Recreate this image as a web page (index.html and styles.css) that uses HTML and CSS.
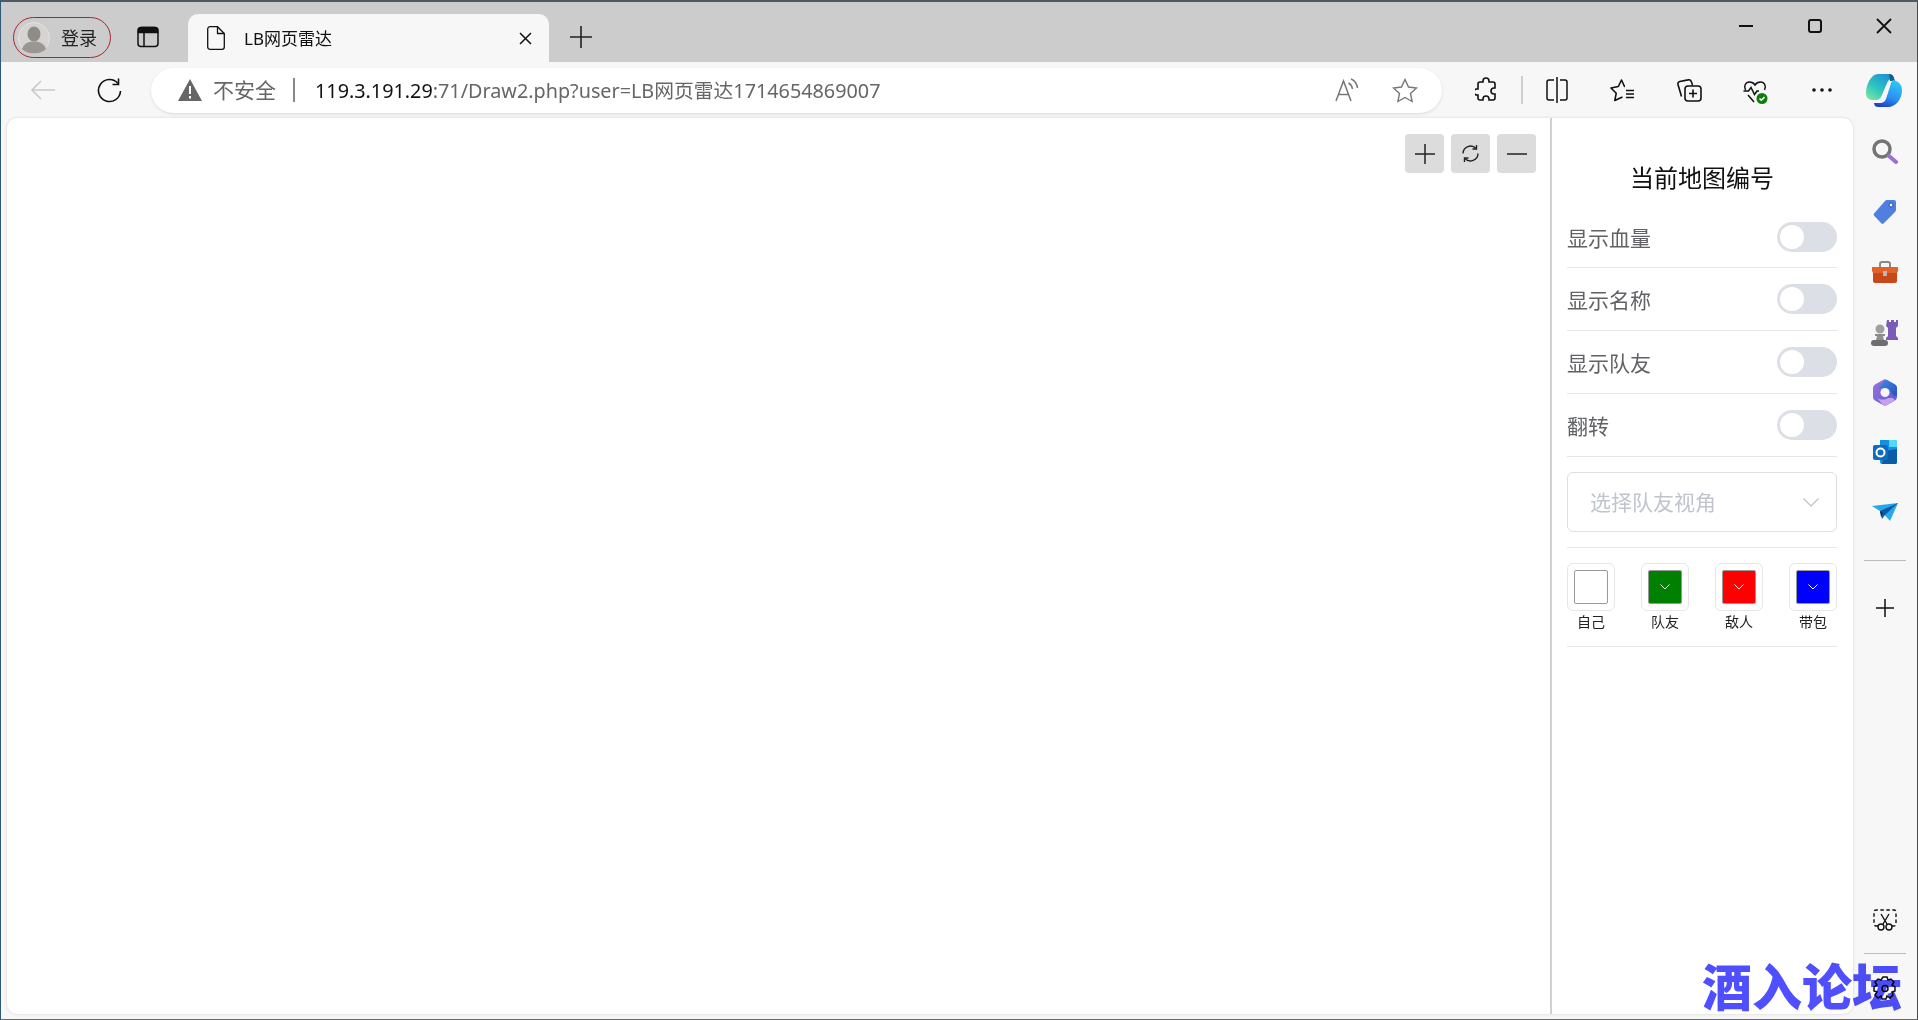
FILE: index.html
```html
<!DOCTYPE html>
<html lang="zh-CN">
<head>
    <meta charset="UTF-8">
    <title>LB网页雷达</title>
    <link rel="stylesheet" href="styles.css">
</head>
<body>
<div class="window">
    <div class="tabstrip">
        <div class="profile">
            <svg class="avatar" width="32" height="32" viewBox="0 0 32 32"><circle cx="16" cy="16" r="15.500" fill="#d6d4d2" stroke="#e4e2e0"/><ellipse cx="16" cy="12" rx="6.500" ry="7.500" fill="#8f8b87"/><path d="M4 27c2-6 7-7.500 12-7.500S26 21 28 27c-3 3-7.500 4.500-12 4.500S7 30 4 27z" fill="#9a9692"/></svg>
            <span class="lift">登录</span>
        </div>
        <svg class="tabs-icon" width="22" height="22" viewBox="0 0 22 22" fill="none" stroke="#111" stroke-width="1.500"><rect x="1" y="1.500" width="20" height="19" rx="3"/><path d="M1.500 4.500a3 3 0 0 1 3-3h13a3 3 0 0 1 3 3v2h-19z" fill="#111"/><path d="M7 6v14"/></svg>
        <div class="tab">
            <svg width="18" height="24" viewBox="0 0 18 24" fill="none" stroke="#111" stroke-width="1.300"><path d="M3 .7h7.500L17.300 7.500V21a2.300 2.300 0 0 1-2.300 2.300H3A2.300 2.300 0 0 1 .7 21V3A2.300 2.300 0 0 1 3 .7z"/><path d="M10.500.7V7.500h6.800"/></svg>
            <span class="tab-title lift">LB网页雷达</span>
            <svg class="tab-close" width="13" height="13" viewBox="0 0 13 13" stroke="#111" stroke-width="1.500"><path d="M1 1l11 11M12 1L1 12"/></svg>
        </div>
        <svg class="new-tab" width="22" height="22" viewBox="0 0 22 22" stroke="#222" stroke-width="1.600"><path d="M11 0v22M0 11h22"/></svg>
        <div class="caption">
            <svg width="16" height="16" viewBox="0 0 16 16" stroke="#111" stroke-width="2"><path d="M1 8h14"/></svg>
            <svg width="16" height="16" viewBox="0 0 16 16" fill="none" stroke="#111" stroke-width="2"><rect x="2" y="2" width="12" height="12" rx="2"/></svg>
            <svg width="16" height="16" viewBox="0 0 16 16" stroke="#111" stroke-width="1.800"><path d="M1 1l14 14M15 1L1 15"/></svg>
        </div>
    </div>

    <div class="toolbar">
        <svg class="back" width="24" height="20" viewBox="0 0 24 20" fill="none" stroke="#c9c9c9" stroke-width="1.600"><path d="M24 10H1M10 1l-9 9 9 9"/></svg>
        <svg class="reload" width="25" height="25" viewBox="0 0 25 25" fill="none" stroke="#111" stroke-width="1.600"><path d="M21 5.500A11 11 0 1 0 23.500 13"/><path d="M21.500 .5v6h-6"/></svg>
        <div class="address">
            <svg width="24" height="22" viewBox="0 0 24 22"><path d="M12 0l12 22H0z" fill="#666"/><path d="M12 7v8M12 17v2.500" stroke="#fff" stroke-width="2"/></svg>
            <span class="not-secure lift">不安全</span>
            <span class="addr-sep"></span>
            <span class="url lift"><b>119.3.191.29</b>:71/Draw2.php?user=LB网页雷达1714654869007</span>
            <svg class="read" width="24" height="24" viewBox="0 0 24 24" fill="none" stroke="#777" stroke-width="1.500"><path d="M1 23L8.500 3 16 23M3.500 16.500h10"/><path d="M13.500 5c2 1 3.500 3 4 6M16 1c3.500 1.500 6 5 6.500 9"/></svg>
            <svg class="star" width="26" height="25" viewBox="0 0 26 25" fill="none" stroke="#777" stroke-width="1.400"><path d="M13 1.500l3.500 7.500 8 1-6 5.500 1.600 8L13 19.500 5.900 23.500l1.600-8-6-5.500 8-1z"/></svg>
        </div>
        <div class="tools">
            <svg class="t-ext" width="22" height="26" viewBox="0 0 22 26" fill="none" stroke="#111" stroke-width="1.600"><path d="M8 4a3 3 0 0 1 6 0v1h4a2 2 0 0 1 2 2v4h-1a3 3 0 0 0 0 6h1v4a2 2 0 0 1-2 2h-4v-1a3 3 0 0 0-6 0v1H5a2 2 0 0 1-2-2v-3H2a3 3 0 0 1 0-6h1V7a2 2 0 0 1 2-2h3z"/></svg>
            <span class="t-sep"></span>
            <svg class="t-split" width="22" height="26" viewBox="0 0 22 26" fill="none" stroke="#111" stroke-width="1.500"><path d="M8 3H3a2 2 0 0 0-2 2v16a2 2 0 0 0 2 2h5M14 3h5a2 2 0 0 1 2 2v16a2 2 0 0 1-2 2h-5M11 0v26"/></svg>
            <svg class="t-fav" width="25" height="23" viewBox="0 0 25 23" fill="none" stroke="#111" stroke-width="1.600" stroke-linejoin="round"><path d="M15 7.500h-.5L11.500 1 8.300 7.500 1 9l5.200 5.300L4.800 21.500 12.500 18"/><path d="M16 11.500h8M16 15h8M16 18.500h8"/></svg>
            <svg class="t-coll" width="25" height="23" viewBox="0 0 25 23" fill="none" stroke="#111" stroke-width="1.600"><path d="M4.500 17.500L1 5.500a2.500 2.500 0 0 1 1.800-3L11 .9a3 3 0 0 1 3.500 2l1 3.500"/><rect x="8" y="7" width="16" height="15" rx="3"/><path d="M16 10.500v8M12 14.500h8"/></svg>
            <svg class="t-health" width="25" height="23" viewBox="0 0 25 23" fill="none" stroke="#111" stroke-width="1.500"><path d="M2.500 9C.5 5 2.500 1 6.500 1c2.500 0 4.500 1.500 5.500 3 1-1.500 3-3 5.500-3 4 0 6 4 4 8"/><path d="M.5 10h5l2.500-3.500 3.500 7 2.500-3.500h2M5 14l6 7"/><circle cx="19" cy="17.500" r="5.500" fill="#107c10" stroke="none"/><path d="M16.500 17.500l1.800 1.800 3.200-3.200" stroke="#fff"/></svg>
            <svg class="t-more" width="20" height="4" viewBox="0 0 20 4" fill="#111"><circle cx="2" cy="2" r="1.800"/><circle cx="10" cy="2" r="1.800"/><circle cx="18" cy="2" r="1.800"/></svg>
            <svg class="t-copilot" width="36" height="34" viewBox="0 0 36 34">
                <defs>
                    <linearGradient id="cpa" x1="0.800" y1="0" x2="0.100" y2="1"><stop offset="0" stop-color="#1c8fd8"/><stop offset=".55" stop-color="#2cc4c0"/><stop offset="1" stop-color="#7ce8a0"/></linearGradient>
                    <linearGradient id="cpb" x1="0.700" y1="0" x2="0.300" y2="1"><stop offset="0" stop-color="#30c8f8"/><stop offset=".6" stop-color="#2a90f0"/><stop offset="1" stop-color="#1c40c8"/></linearGradient>
                </defs>
                <path d="M12 1h11c2.500 0 4 1 5 4-3 0-5 1.500-6.500 4L15 24c-1 2-2.500 3-5 3H6c-4 0-6-3-6-7C0 12 5 1 12 1z" fill="url(#cpa)"/>
                <path d="M23 1c2.500 0 4 1 5 4l1 3h-5z" fill="#16608c"/>
                <path d="M27 7c5 1 9 4 9 10 0 9-6 17-14 17H12c-2 0-3.500-1-4-4h6c3 0 5-1.500 6-4l4.500-14c.5-2 1-4 2.500-5z" fill="url(#cpb)"/>
            </svg>
        </div>
    </div>

    <div class="main">
        <div class="page">
            <div class="canvas">
                <div class="zoom-btns">
                    <button class="zoom-btn"><svg width="20" height="20" viewBox="0 0 20 20" stroke="#222" stroke-width="1.500"><path d="M10 0v20M0 10h20"/></svg></button>
                    <button class="zoom-btn"><svg width="19" height="19" viewBox="0 0 19 19" fill="none" stroke="#222" stroke-width="1.400"><path d="M2 9.500A7.500 7.500 0 0 1 15 4.500M17 9.500A7.500 7.500 0 0 1 4 14.500"/><path d="M15.500 1v4h-4M3.500 18v-4h4"/></svg></button>
                    <button class="zoom-btn"><svg width="20" height="4" viewBox="0 0 20 4" stroke="#222" stroke-width="1.500"><path d="M0 2h20"/></svg></button>
                </div>
            </div>
            <div class="panel">
                <h2 class="panel-title">当前地图编号</h2>
                <div class="row"><span>显示血量</span><span class="switch"></span></div>
                <div class="row"><span>显示名称</span><span class="switch"></span></div>
                <div class="row"><span>显示队友</span><span class="switch"></span></div>
                <div class="row"><span>翻转</span><span class="switch"></span></div>
                <div class="select-wrap">
                    <div class="select">
                        <span class="lift">选择队友视角</span>
                        <svg width="16" height="9" viewBox="0 0 16 9" fill="none" stroke="#c0c4cc" stroke-width="1.300"><path d="M.5.500L8 8 15.500.5"/></svg>
                    </div>
                </div>
                <div class="colors">
                    <div class="color"><div class="picker"><div class="swatch swatch-none"></div></div><span>自己</span></div>
                    <div class="color"><div class="picker"><div class="swatch swatch-green"><svg width="10" height="6" viewBox="0 0 10 6" fill="none" stroke="#fff"><path d="M.5.500L5 5 9.500.5"/></svg></div></div><span>队友</span></div>
                    <div class="color"><div class="picker"><div class="swatch swatch-red"><svg width="10" height="6" viewBox="0 0 10 6" fill="none" stroke="#fff"><path d="M.5.500L5 5 9.500.5"/></svg></div></div><span>敌人</span></div>
                    <div class="color"><div class="picker"><div class="swatch swatch-blue"><svg width="10" height="6" viewBox="0 0 10 6" fill="none" stroke="#fff"><path d="M.5.500L5 5 9.500.5"/></svg></div></div><span>带包</span></div>
                </div>
            </div>
        </div>
        <div class="sidebar">
            <div class="side-cell"><svg width="26" height="26" viewBox="0 0 26 26" fill="none"><circle cx="10" cy="10" r="8" stroke="#757575" stroke-width="3.500"/><path d="M17 17l7 6" stroke="#9b6fd8" stroke-width="4" stroke-linecap="round"/></svg></div>
            <div class="side-cell"><svg width="24" height="26" viewBox="0 0 24 26"><path d="M14 1h7a2 2 0 0 1 2 2v8a3 3 0 0 1-1 2L11 24a2 2 0 0 1-3 0l-6.500-7a2 2 0 0 1 0-3L12 2a3 3 0 0 1 2-1z" fill="#4f7fe0"/><circle cx="18" cy="6" r="2" fill="#fff" stroke="#2a4aa0"/></svg></div>
            <div class="side-cell"><svg width="28" height="22" viewBox="0 0 28 22"><path d="M9 6V3a2 2 0 0 1 2-2h6a2 2 0 0 1 2 2v3" fill="none" stroke="#8a8a8a" stroke-width="2"/><path d="M1 6h26v4l-1 2H2l-1-2z" fill="#e2622a"/><path d="M2 12h24v8a2 2 0 0 1-2 2H4a2 2 0 0 1-2-2z" fill="#c8481a"/><rect x="12" y="10" width="4" height="5" fill="#b8b8b8"/></svg></div>
            <div class="side-cell"><svg width="28" height="27" viewBox="0 0 28 27"><path d="M16 1h2v2h2V1h3v2h2V1h2v6l-2 2v8l2 2v2H15v-2l2-2V9l-2-2z" fill="#7a5cb8"/><circle cx="9" cy="10" r="4.500" fill="#a0a0a0"/><path d="M4 15h10v2H4z" fill="#8a8a8a"/><path d="M6 17h6l1 4H5z" fill="#909090"/><rect x="0" y="21" width="17" height="6" rx="3" fill="#6e6e6e"/></svg></div>
            <div class="side-cell"><svg width="24" height="27" viewBox="0 0 24 27"><defs><linearGradient id="m3a" x1="0" y1="0" x2="1" y2="1"><stop offset="0" stop-color="#a070e0"/><stop offset="1" stop-color="#5060d0"/></linearGradient><linearGradient id="m3b" x1="0" y1="0" x2="1" y2="1"><stop offset="0" stop-color="#3a90e0"/><stop offset="1" stop-color="#2a50c0"/></linearGradient></defs><path d="M10 1a4 4 0 0 1 4 0l8 4.500a4 4 0 0 1 2 3.500v9a4 4 0 0 1-2 3.500l-8 4.500a4 4 0 0 1-4 0L2 21.500A4 4 0 0 1 0 18V9a4 4 0 0 1 2-3.500z" fill="url(#m3a)"/><path d="M10 1a4 4 0 0 1 4 0l8 4.500a4 4 0 0 1 2 3.500v7c-1 1.500-3 1-5-1l-1-2c-2-4-8-5-12-3 1-4 4-6 7-9z" fill="url(#m3b)"/><path d="M4 19c3 2 8 2 11 0l5 0 2 2.500-8 4.500a4 4 0 0 1-4 0z" fill="#c8a0f0"/><circle cx="12" cy="13.500" r="4.500" fill="#f7f7f7"/></svg></div>
            <div class="side-cell"><svg width="24" height="24" viewBox="0 0 24 24"><path d="M7 0h15a2 2 0 0 1 2 2v20a2 2 0 0 1-2 2H9a2 2 0 0 1-2-2z" fill="#1490df"/><path d="M16 0h6a2 2 0 0 1 2 2v5h-8z" fill="#50d9ff"/><path d="M12 11l12-2v13a2 2 0 0 1-2 2H9z" fill="#0a5ca8"/><rect x="0" y="5" width="15" height="15" rx="2" fill="#0f6cbd"/><circle cx="7.500" cy="12.500" r="4" fill="none" stroke="#fff" stroke-width="2"/></svg></div>
            <div class="side-cell"><svg width="26" height="18" viewBox="0 0 26 18"><path d="M0 3l26-3-8 18-7-8z" fill="#28a8ea"/><path d="M26 0L8 8l2 8 3-4z" fill="#0a5ca8"/><path d="M8 8l3 2-2 4z" fill="#1a2a50"/></svg></div>
            <span class="side-sep"></span>
            <div class="side-cell"><svg width="18" height="18" viewBox="0 0 18 18" stroke="#111" stroke-width="1.500"><path d="M9 0v18M0 9h18"/></svg></div>
            <span class="side-push"></span>
            <div class="side-cell"><svg width="24" height="22" viewBox="0 0 24 22" fill="none" stroke="#111" stroke-width="1.400"><path d="M5 17H3a2 2 0 0 1-2-2V3a2 2 0 0 1 2-2h18a2 2 0 0 1 2 2v12a2 2 0 0 1-2 2h-2" stroke-dasharray="3.500 2.500"/><path d="M8 5l6 10M16 5l-6 10"/><circle cx="8" cy="18" r="3"/><circle cx="16" cy="18" r="3"/></svg></div>
            <span class="side-sep side-sep-low"></span>
            <div class="side-cell"><svg width="24" height="25" viewBox="0 0 24 25" fill="none" stroke="#111" stroke-width="1.500"><path d="M10 1h4l1 3 3-1 3 3-2 3 3 2v4l-3 1 1 3-3 3-3-2-1 3h-4l-1-3-3 2-3-3 2-3-3-1v-4l3-2-2-3 3-3 3 1z"/><circle cx="12" cy="12.500" r="3"/></svg></div>
        </div>
    </div>
    <div class="watermark">酒入论坛</div>
</div>
</body>
</html>
```
FILE: styles.css
```css
* {
    box-sizing: border-box;
}
html, body {
    margin: 0;
    height: 100%;
    overflow: hidden;
}
body {
    font-family: "Noto Sans", "Noto Sans CJK SC", sans-serif;
    background-color: #f7f7f7;
}
svg {
    display: block;
    flex: none;
}
.lift {
    padding-bottom: 2px;
}
.window {
    position: relative;
    width: 1918px;
    height: 1020px;
    border-top: 2px solid #4c5a66;
    border-left: 1px solid #2d5878;
    border-right: 1px solid #4a4a4a;
    border-bottom: 1px solid #6a6a6a;
    display: flex;
    flex-direction: column;
}

/* tab strip */
.tabstrip {
    height: 60px;
    background-color: #cccccc;
    display: flex;
    align-items: flex-start;
    flex: none;
}
.profile {
    width: 98px;
    height: 41px;
    margin: 15px 0 0 12px;
    border: 1.500px solid #a4262c;
    border-radius: 21px;
    display: flex;
    align-items: center;
    padding-left: 4px;
    gap: 11px;
    font-size: 18px;
    color: #222222;
}
.tabs-icon {
    margin: 24px 0 0 26px;
}
.tab {
    width: 361px;
    height: 48px;
    margin: 12px 0 0 29px;
    background-color: #f7f7f7;
    border-radius: 10px 10px 0 0;
    display: flex;
    align-items: center;
    padding-left: 19px;
}
.tab-title {
    margin-left: 19px;
    font-size: 17px;
    color: #111111;
    flex: 1;
}
.tab-close {
    margin-right: 17px;
}
.new-tab {
    margin: 24px 0 0 21px;
}
.caption {
    margin-left: auto;
    margin-top: 16px;
    padding-right: 25px;
    display: flex;
    gap: 53px;
}

/* toolbar */
.toolbar {
    height: 56px;
    background-color: #f7f7f7;
    display: flex;
    align-items: center;
    flex: none;
}
.back {
    margin-left: 30px;
}
.reload {
    margin-left: 42px;
}
.address {
    width: 1291px;
    height: 45px;
    margin-left: 29px;
    background-color: #ffffff;
    border-radius: 23px;
    box-shadow: 0 1px 3px rgba(0, 0, 0, 0.12);
    display: flex;
    align-items: center;
    padding-left: 27px;
}
.not-secure {
    margin-left: 11px;
    font-size: 21px;
    color: #666666;
}
.addr-sep {
    width: 2px;
    height: 24px;
    margin: 0 20px 0 17px;
    background-color: #888888;
}
.url {
    font-size: 19.800px;
    color: #666666;
    flex: 1;
    white-space: nowrap;
}
.url b {
    font-weight: 400;
    color: #111111;
}
.read {
    margin-right: 33px;
}
.star {
    margin-right: 24px;
}
.tools {
    display: flex;
    align-items: center;
}
.t-ext {
    margin-left: 33px;
}
.t-sep {
    width: 2px;
    height: 28px;
    margin-left: 24px;
    background-color: #cfcfcf;
}
.t-split {
    margin-left: 23px;
}
.t-fav {
    margin-left: 42px;
}
.t-coll {
    margin-left: 42px;
}
.t-health {
    margin-left: 41px;
    margin-top: 4px;
}
.t-more {
    margin-left: 44px;
}
.t-copilot {
    margin-left: 34px;
}

/* page */
.main {
    flex: 1;
    display: flex;
    min-height: 0;
}
.page {
    width: 1846px;
    margin: 0 0 5px 6px;
    background-color: #ffffff;
    border-radius: 10px;
    box-shadow: 0 0 3px rgba(0, 0, 0, 0.15);
    display: flex;
    overflow: hidden;
}
.canvas {
    flex: 1;
    position: relative;
}
.zoom-btns {
    position: absolute;
    top: 16px;
    right: 14px;
    display: flex;
    gap: 7px;
}
.zoom-btn {
    width: 39px;
    height: 39px;
    padding: 0;
    border: 0;
    border-radius: 4px;
    background-color: #dcdcdc;
    display: flex;
    align-items: center;
    justify-content: center;
}

/* right panel */
.panel {
    width: 303px;
    border-left: 2px solid #d0d0d0;
    padding: 0 16px 0 15px;
}
.panel-title {
    height: 88px;
    margin: 0;
    padding-top: 43px;
    font-size: 24px;
    line-height: 34px;
    font-weight: 400;
    text-align: center;
    color: #111111;
}
.row {
    height: 63px;
    border-bottom: 1px solid #e6e6e6;
    display: flex;
    align-items: center;
    justify-content: space-between;
    font-size: 21px;
    color: #606266;
}
.row:first-of-type {
    height: 62px;
}
.switch {
    width: 60px;
    height: 30px;
    border-radius: 15px;
    background-color: #dcdfe6;
    padding: 3px;
}
.switch::before {
    content: "";
    display: block;
    width: 24px;
    height: 24px;
    border-radius: 50%;
    background-color: #ffffff;
}
.select-wrap {
    padding: 15px 0;
    border-bottom: 1px solid #e6e6e6;
}
.select {
    height: 60px;
    border: 1px solid #dcdfe6;
    border-radius: 6px;
    padding: 0 17px 0 22px;
    display: flex;
    align-items: center;
    justify-content: space-between;
    font-size: 21px;
    color: #c0c4cc;
}
.colors {
    padding: 15px 0 14px;
    border-bottom: 1px solid #e6e6e6;
    display: flex;
    justify-content: space-between;
}
.color {
    width: 48px;
    display: flex;
    flex-direction: column;
    align-items: center;
    font-size: 14px;
    line-height: 21px;
    color: #222222;
}
.picker {
    width: 48px;
    height: 48px;
    border: 1px solid #e6e6e6;
    border-radius: 6px;
    display: flex;
    align-items: center;
    justify-content: center;
}
.swatch {
    width: 34px;
    height: 34px;
    border: 1px solid #999999;
    border-radius: 2px;
    display: flex;
    align-items: center;
    justify-content: center;
}
.swatch-none {
    background-color: #ffffff;
}
.swatch-green {
    background-color: #008000;
}
.swatch-red {
    background-color: #ff0000;
}
.swatch-blue {
    background-color: #0000ff;
}

/* edge sidebar */
.sidebar {
    flex: 1;
    display: flex;
    flex-direction: column;
    align-items: center;
    padding: 4px 0 1px;
}
.side-cell {
    height: 60px;
    display: flex;
    align-items: center;
    justify-content: center;
}
.side-sep {
    width: 42px;
    height: 1px;
    margin: 18px 0 17px;
    background-color: #bcbcbc;
}
.side-push {
    flex: 1;
}
.side-sep-low {
    margin: 3px 0 4px;
}
.watermark {
    position: absolute;
    left: 1701px;
    top: 954px;
    font-family: "Noto Sans CJK SC", sans-serif;
    font-size: 50px;
    line-height: 56px;
    font-weight: 900;
    color: #4f4fff;
    white-space: nowrap;
    mix-blend-mode: multiply;
}
```
